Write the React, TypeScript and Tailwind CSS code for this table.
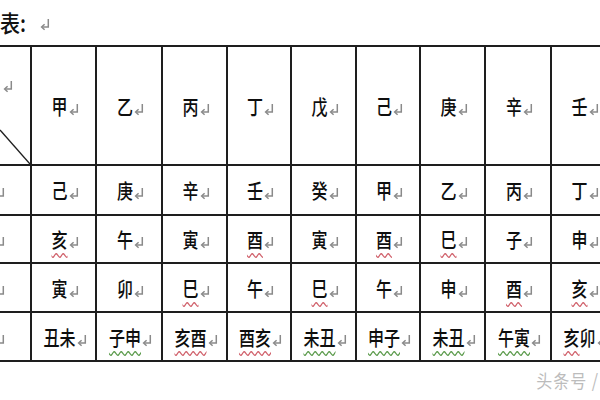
import React from "react";

const colClasses = [
  "w-[32px]",
  "w-[65px]",
  "w-[66px]",
  "w-[65px]",
  "w-[64px]",
  "w-[65px]",
  "w-[64px]",
  "w-[65px]",
  "w-[66px]",
  "w-[65px]",
];

type Seg = { t: string; u?: "r" | "g" };
type Cell = Seg[];

const header = ["甲", "乙", "丙", "丁", "戊", "己", "庚", "辛", "壬"].map((t) => [{ t }] as Cell);
const rows: { h: string; cells: Cell[] }[] = [
  { h: "h-[50px]", cells: ["己", "庚", "辛", "壬", "癸", "甲", "乙", "丙", "丁"].map((t) => [{ t }]) },
  {
    h: "h-[48px]",
    cells: [
      [{ t: "亥", u: "r" }],
      [{ t: "午" }],
      [{ t: "寅" }],
      [{ t: "酉", u: "r" }],
      [{ t: "寅" }],
      [{ t: "酉", u: "r" }],
      [{ t: "巳", u: "r" }],
      [{ t: "子" }],
      [{ t: "申" }],
    ],
  },
  {
    h: "h-[49px]",
    cells: [
      [{ t: "寅" }],
      [{ t: "卯" }],
      [{ t: "巳", u: "r" }],
      [{ t: "午" }],
      [{ t: "巳", u: "r" }],
      [{ t: "午" }],
      [{ t: "申" }],
      [{ t: "酉", u: "r" }],
      [{ t: "亥", u: "r" }],
    ],
  },
  {
    h: "h-[49px]",
    cells: [
      [{ t: "丑未" }],
      [{ t: "子申", u: "g" }],
      [{ t: "亥酉", u: "r" }],
      [{ t: "酉亥", u: "r" }],
      [{ t: "未丑", u: "g" }],
      [{ t: "申子", u: "g" }],
      [{ t: "未丑", u: "g" }],
      [{ t: "午寅", u: "g" }],
      [{ t: "亥", u: "r" }, { t: "卯" }],
    ],
  },
];

function Mark() {
  return (
    <svg width="10" height="13" viewBox="0 0 10 13" className="ml-[1px] mt-[7px] shrink-0">
      <path d="M8.3 1 V9 H2" fill="none" stroke="#8a8a8a" strokeWidth="1.5" />
      <path d="M4.6 6.2 L1.6 9 L4.6 11.8" fill="none" stroke="#8a8a8a" strokeWidth="1.5" />
    </svg>
  );
}

function CellText({ cell }: { cell: Cell }) {
  return (
    <div className="flex items-center justify-center pl-[3px]">
      <span className="inline-flex scale-y-[1.3] text-[16px] font-medium leading-none text-[#0e0e0e]">
        {cell.map((s, i) => (
          <span
            key={i}
            className={
              s.u === "r"
                ? "underline decoration-wavy decoration-[#d0606a] decoration-1 underline-offset-[3px]"
                : s.u === "g"
                ? "underline decoration-wavy decoration-[#5a9a4a] decoration-1 underline-offset-[3px]"
                : ""
            }
          >
            {s.t}
          </span>
        ))}
      </span>
      <Mark />
    </div>
  );
}

export default function App() {
  return (
    <div
      className="w-[600px] h-[400px] overflow-hidden bg-white relative"
      style={{ fontFamily: '"Noto Sans CJK SC", "Noto Sans", sans-serif' }}
    >
      <div className="h-[45px] flex items-center">
        <span className="scale-y-[1.15] text-[20px] font-medium leading-none text-[#111]">表:</span>
        <span className="ml-[13px] mb-[4px]">
          <Mark />
        </span>
      </div>
      <div className="w-[617px] border-t-2 border-[#1e1e1e]">
        <div className="flex h-[119px] border-b-2 border-[#1e1e1e]">
          <div className={`${colClasses[0]} relative border-r-2 border-[#1e1e1e] shrink-0`}>
            <div className="absolute left-[2px] top-[26px]">
              <Mark />
            </div>
            <svg className="absolute inset-0" width="30" height="117" viewBox="0 0 30 117">
              <line x1="0" y1="83" x2="30" y2="117" stroke="#1e1e1e" strokeWidth="1.4" />
            </svg>
          </div>
          {header.map((c, i) => (
            <div
              key={i}
              className={`${colClasses[i + 1]} shrink-0 border-r-2 border-[#1e1e1e] flex items-center justify-center`}
            >
              <CellText cell={c} />
            </div>
          ))}
        </div>
        {rows.map((r, ri) => (
          <div key={ri} className={`flex ${r.h} border-b-2 border-[#1e1e1e]`}>
            <div className={`${colClasses[0]} shrink-0 border-r-2 border-[#1e1e1e] flex items-center overflow-hidden`}>
              <div className="-ml-[6px]">
                <Mark />
              </div>
            </div>
            {r.cells.map((c, i) => (
              <div
                key={i}
                className={`${colClasses[i + 1]} shrink-0 border-r-2 border-[#1e1e1e] flex items-center justify-center`}
              >
                <CellText cell={c} />
              </div>
            ))}
          </div>
        ))}
      </div>
      <div className="flex justify-end pr-[1px] pt-[6px]">
        <span className="text-[16px] text-[#bcbcbc] tracking-[1px] scale-y-[1.15]">头条号 /</span>
      </div>
    </div>
  );
}
